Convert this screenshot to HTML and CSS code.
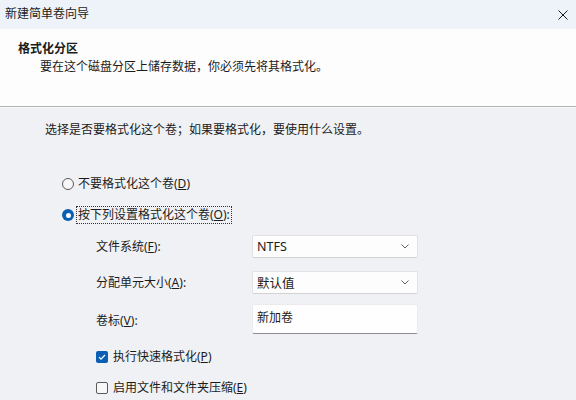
FILE: index.html
```html
<!DOCTYPE html>
<html lang="zh-CN">
<head>
<meta charset="utf-8">
<title>新建简单卷向导</title>
<link rel="stylesheet" href="styles.css">
</head>
<body>
<div class="window">
  <div class="titlebar">
    <span class="title">新建简单卷向导</span>
    <svg class="close" width="10" height="10" viewBox="0 0 10 10"><path d="M0.5 0.5 L9.5 9.5 M9.5 0.5 L0.5 9.5" stroke="#1a1a1a" stroke-width="1" fill="none"/></svg>
  </div>
  <div class="header">
    <div class="h-title">格式化分区</div>
    <div class="h-sub">要在这个磁盘分区上储存数据，你必须先将其格式化。</div>
  </div>
  <div class="content">
    <div class="intro">选择是否要格式化这个卷；如果要格式化，要使用什么设置。</div>
    <div class="radios">
      <div class="row">
        <span class="radio"></span>
        <span class="lbl">不要格式化这个卷(<u>D</u>)</span>
      </div>
      <div class="row">
        <span class="radio on"></span>
        <span class="lbl focus">按下列设置格式化这个卷(<u>O</u>):</span>
      </div>
    </div>
    <div class="form">
      <div class="f-label">文件系统(<u>F</u>):</div>
      <div class="select"><span>NTFS</span><svg width="8" height="5" viewBox="0 0 8 5"><path d="M0.5 0.5 L4 4 L7.5 0.5" stroke="#606060" fill="none"/></svg></div>
      <div class="f-label">分配单元大小(<u>A</u>):</div>
      <div class="select"><span>默认值</span><svg width="8" height="5" viewBox="0 0 8 5"><path d="M0.5 0.5 L4 4 L7.5 0.5" stroke="#606060" fill="none"/></svg></div>
      <div class="f-label">卷标(<u>V</u>):</div>
      <div class="textbox">新加卷</div>
    </div>
    <div class="checks">
      <div class="row">
        <span class="check on"><svg width="12" height="12" viewBox="0 0 12 12"><path d="M3 6.2 L5 8.2 L9 4" stroke="#fff" stroke-width="1.2" fill="none"/></svg></span>
        <span class="lbl">执行快速格式化(<u>P</u>)</span>
      </div>
      <div class="row">
        <span class="check"></span>
        <span class="lbl">启用文件和文件夹压缩(<u>E</u>)</span>
      </div>
    </div>
  </div>
</div>
</body>
</html>
```
FILE: styles.css
```css
html, body {
  margin: 0;
  padding: 0;
  background: #f0f1f4;
}
body {
  width: 576px;
  height: 400px;
  overflow: hidden;
  font-family: "Segoe UI", "Noto Sans", "Noto Sans CJK SC", sans-serif;
  font-size: 12px;
  color: #1b1b1b;
}
.window {
  width: 576px;
  height: 400px;
  display: flex;
  flex-direction: column;
}
.titlebar {
  height: 29px;
  flex: none;
  background: #eef2f9;
  display: flex;
  align-items: center;
  justify-content: space-between;
  padding: 0 8px 0 5px;
  box-sizing: border-box;
}
.title {
  font-size: 12px;
  line-height: 16px;
  margin-top: -1px;
}
.close {
  display: block;
}
.header {
  flex: none;
  background: #fdfdfe;
  border-bottom: 1px solid #b4b4b6;
  box-shadow: 0 1px 0 #f8f8f9;
  padding: 12px 0 0 18px;
  height: 65px;
}
.h-title {
  font-weight: bold;
  line-height: 16px;
}
.h-sub {
  line-height: 16px;
  margin-top: 2px;
  padding-left: 22px;
}
.content {
  flex: 1;
  padding: 15px 0 0 45px;
}
.intro {
  line-height: 16px;
}
.radios {
  margin: 38px 0 0 17px;
  display: flex;
  flex-direction: column;
  gap: 15px;
}
.row {
  display: flex;
  align-items: center;
  height: 16px;
  line-height: 16px;
}
.radio {
  width: 10px;
  height: 10px;
  border: 1px solid #5a5a5a;
  border-radius: 50%;
  background: #f7f7f7;
  margin-right: 4px;
  flex: none;
}
.radio.on {
  width: 12px;
  height: 12px;
  border: none;
  background: #0a5fb4;
  position: relative;
}
.radio.on::after {
  content: "";
  position: absolute;
  left: 3.5px;
  top: 3.5px;
  width: 5px;
  height: 5px;
  border-radius: 50%;
  background: #fff;
}
.lbl.focus {
  outline: 1px dotted #333;
  outline-offset: 0;
  padding: 0 1px;
  margin-left: -1px;
}
.form {
  margin: 12px 0 0 51px;
  display: grid;
  grid-template-columns: 156px 166px;
  row-gap: 13px;
  align-items: center;
}
.f-label {
  line-height: 16px;
}
.select {
  height: 23px;
  box-sizing: border-box;
  background: #fdfdfd;
  border: 1px solid #e2e2e4;
  border-bottom-color: #d2d2d4;
  border-radius: 2px;
  display: flex;
  align-items: center;
  justify-content: space-between;
  padding: 0 8px 0 4px;
}
.select span {
  font-size: 12.5px;
}
.textbox {
  height: 30px;
  box-sizing: border-box;
  background: #fefefe;
  border: 1px solid #ebebed;
  border-bottom: 1px solid #8d8d8f;
  border-radius: 2px;
  padding: 5px 4px 0;
  line-height: 16px;
  margin-top: -3px;
}
.checks {
  margin: 15px 0 0 51px;
  display: flex;
  flex-direction: column;
  gap: 15px;
}
.check {
  width: 10px;
  height: 10px;
  border: 1px solid #5a5a5a;
  border-radius: 2px;
  background: #f7f7f7;
  margin-right: 5px;
  flex: none;
}
.check.on {
  width: 12px;
  height: 12px;
  border: none;
  background: #0a5fb4;
  display: flex;
}
```
